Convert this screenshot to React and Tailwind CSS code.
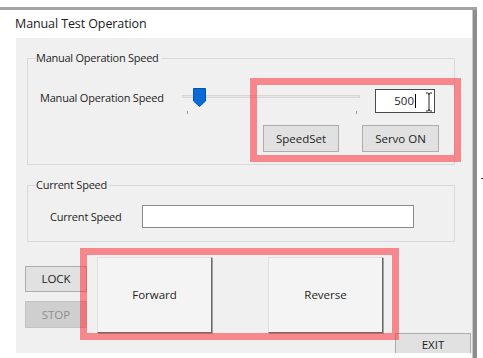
import React from 'react';

const font = { fontFamily: '"Open Sans", "Noto Sans", Arial, sans-serif' };

function GroupBox({ title, className, children }) {
  return (
    <div className={`relative border border-[#d9d9d9] ${className}`}>
      <span className="absolute -top-[9px] left-[8px] bg-[#f0f0f0] pr-[2px] text-[11px] tracking-[-0.25px] leading-[16px] text-[#1e1e1e]">
        {title}
      </span>
      {children}
    </div>
  );
}

function Slider() {
  return (
    <div className="relative w-[178px] h-[27px]">
      <div className="absolute left-0 right-0 top-[7px] h-[3px] bg-[#e7e7e7] border border-[#d6d6d6]"></div>
      <svg className="absolute left-[11px] top-0" width="13" height="19" viewBox="0 0 13 19">
        <path d="M0.5 0.5 H12.5 V13 L6.5 18.5 L0.5 13 Z" fill="#0a6bd6" stroke="#0054b3" />
      </svg>
      <div className="absolute left-[5px] top-[23px] w-px h-[3px] bg-[#9a9a9a]"></div>
      <div className="absolute left-[174px] top-[23px] w-px h-[3px] bg-[#9a9a9a]"></div>
    </div>
  );
}

function FlatButton({ children, className, disabled }) {
  return (
    <button
      className={`flex items-center justify-center border text-[11.5px] ${
        disabled
          ? 'bg-[#cfcfcf] border-[#c2c2c2] text-[#8e8e8e]'
          : 'bg-[#e1e1e1] border-[#adadad] text-[#1e1e1e]'
      } ${className}`}
    >
      {children}
    </button>
  );
}

function BigButton({ children }) {
  return (
    <button className="flex items-center justify-center w-[115px] h-[76px] bg-[#f4f4f4] border border-t-[#e0e0e0] border-l-[#e0e0e0] border-r-[#6a6a6a] border-b-[#6a6a6a] shadow-[1px_1px_0_#a0a0a0] text-[11.5px] text-[#1e1e1e]">
      {children}
    </button>
  );
}

export default function App() {
  return (
    <div className="w-[483px] h-[358px] bg-white overflow-hidden text-[#1e1e1e]" style={font}>
      <div className="h-[7px]"></div>
      <div className="w-[477px] h-[3px] bg-[#a3a3a3]"></div>
      <div className="flex">
        <div className="w-[472px]">
          <div className="h-[28px] pl-[15px] flex items-center text-[12.5px] tracking-[-0.1px] text-[#1a1a1a]">
            Manual Test Operation
          </div>

          <div className="relative ml-[16px] w-[456px] h-[315px] bg-[#f0f0f0] overflow-hidden">
            <div className="pt-[20px] pl-[11px]">
              <GroupBox title="Manual Operation Speed" className="w-[428px] h-[107px]">
                <div className="pt-[29px] pl-[12px]">
                  <div className="flex items-start">
                    <div className="w-[142px] mt-[2px] text-[11px] tracking-[-0.2px] leading-[16px]">Manual Operation Speed</div>
                    <Slider />
                    <div className="relative ml-[15px] mt-[1px] w-[60px] h-[24px] bg-white border border-[#4a4a4a] flex items-center justify-end pr-[18px] text-[11.5px]">
                      500
                      <span className="ml-px w-px h-[14px] bg-black"></span>
                      <svg className="absolute right-[1px] top-[2px]" width="8" height="20" viewBox="0 0 8 20">
                        <path d="M1 1 H3 Q4 1 4 3 V17 Q4 19 3 19 H1 M7 1 H5 Q4 1 4 3 M4 17 Q4 19 5 19 H7" fill="none" stroke="#222" strokeWidth="1" />
                      </svg>
                    </div>
                  </div>
                  <div className="flex mt-[10px] pl-[223px] gap-[23px]">
                    <FlatButton className="w-[76px] h-[27px]">SpeedSet</FlatButton>
                    <FlatButton className="w-[77px] h-[27px]">Servo ON</FlatButton>
                  </div>
                </div>
              </GroupBox>

              <GroupBox title="Current Speed" className="mt-[20px] w-[428px] h-[57px]">
                <div className="flex items-center pt-[19px] pl-[22px]">
                  <div className="w-[92px] text-[11px] tracking-[-0.2px] leading-[16px]">Current Speed</div>
                  <div className="w-[272px] h-[23px] bg-white border border-[#8a8a8a]"></div>
                </div>
              </GroupBox>
            </div>

            <div className="flex items-start mt-[15px] pl-[9px]">
              <div className="flex flex-col gap-[9px] mt-[9px]">
                <FlatButton className="w-[62px] h-[26px]">LOCK</FlatButton>
                <FlatButton className="w-[62px] h-[27px]" disabled>STOP</FlatButton>
              </div>
              <div className="ml-[10px]">
                <BigButton>Forward</BigButton>
              </div>
              <div className="ml-[56px]">
                <BigButton>Reverse</BigButton>
              </div>
              <FlatButton className="ml-[12px] mt-[76px] w-[76px] h-[24px]">EXIT</FlatButton>
            </div>

            <div className="absolute left-[234px] top-[40px] w-[211px] h-[84px] border-[7px] border-[rgba(250,50,60,0.55)]"></div>
            <div className="absolute left-[64px] top-[210px] w-[319px] h-[92px] border-[7px] border-[rgba(250,50,60,0.55)]"></div>
          </div>
        </div>
        <div className="w-[5px] h-[348px] bg-[#8e8e8e] border-l border-[#c8c8c8]"></div>
        <div className="w-[6px]">
          <div className="mt-[168px] ml-[4px] w-[2px] h-px bg-[#444]"></div>
        </div>
      </div>
    </div>
  );
}
